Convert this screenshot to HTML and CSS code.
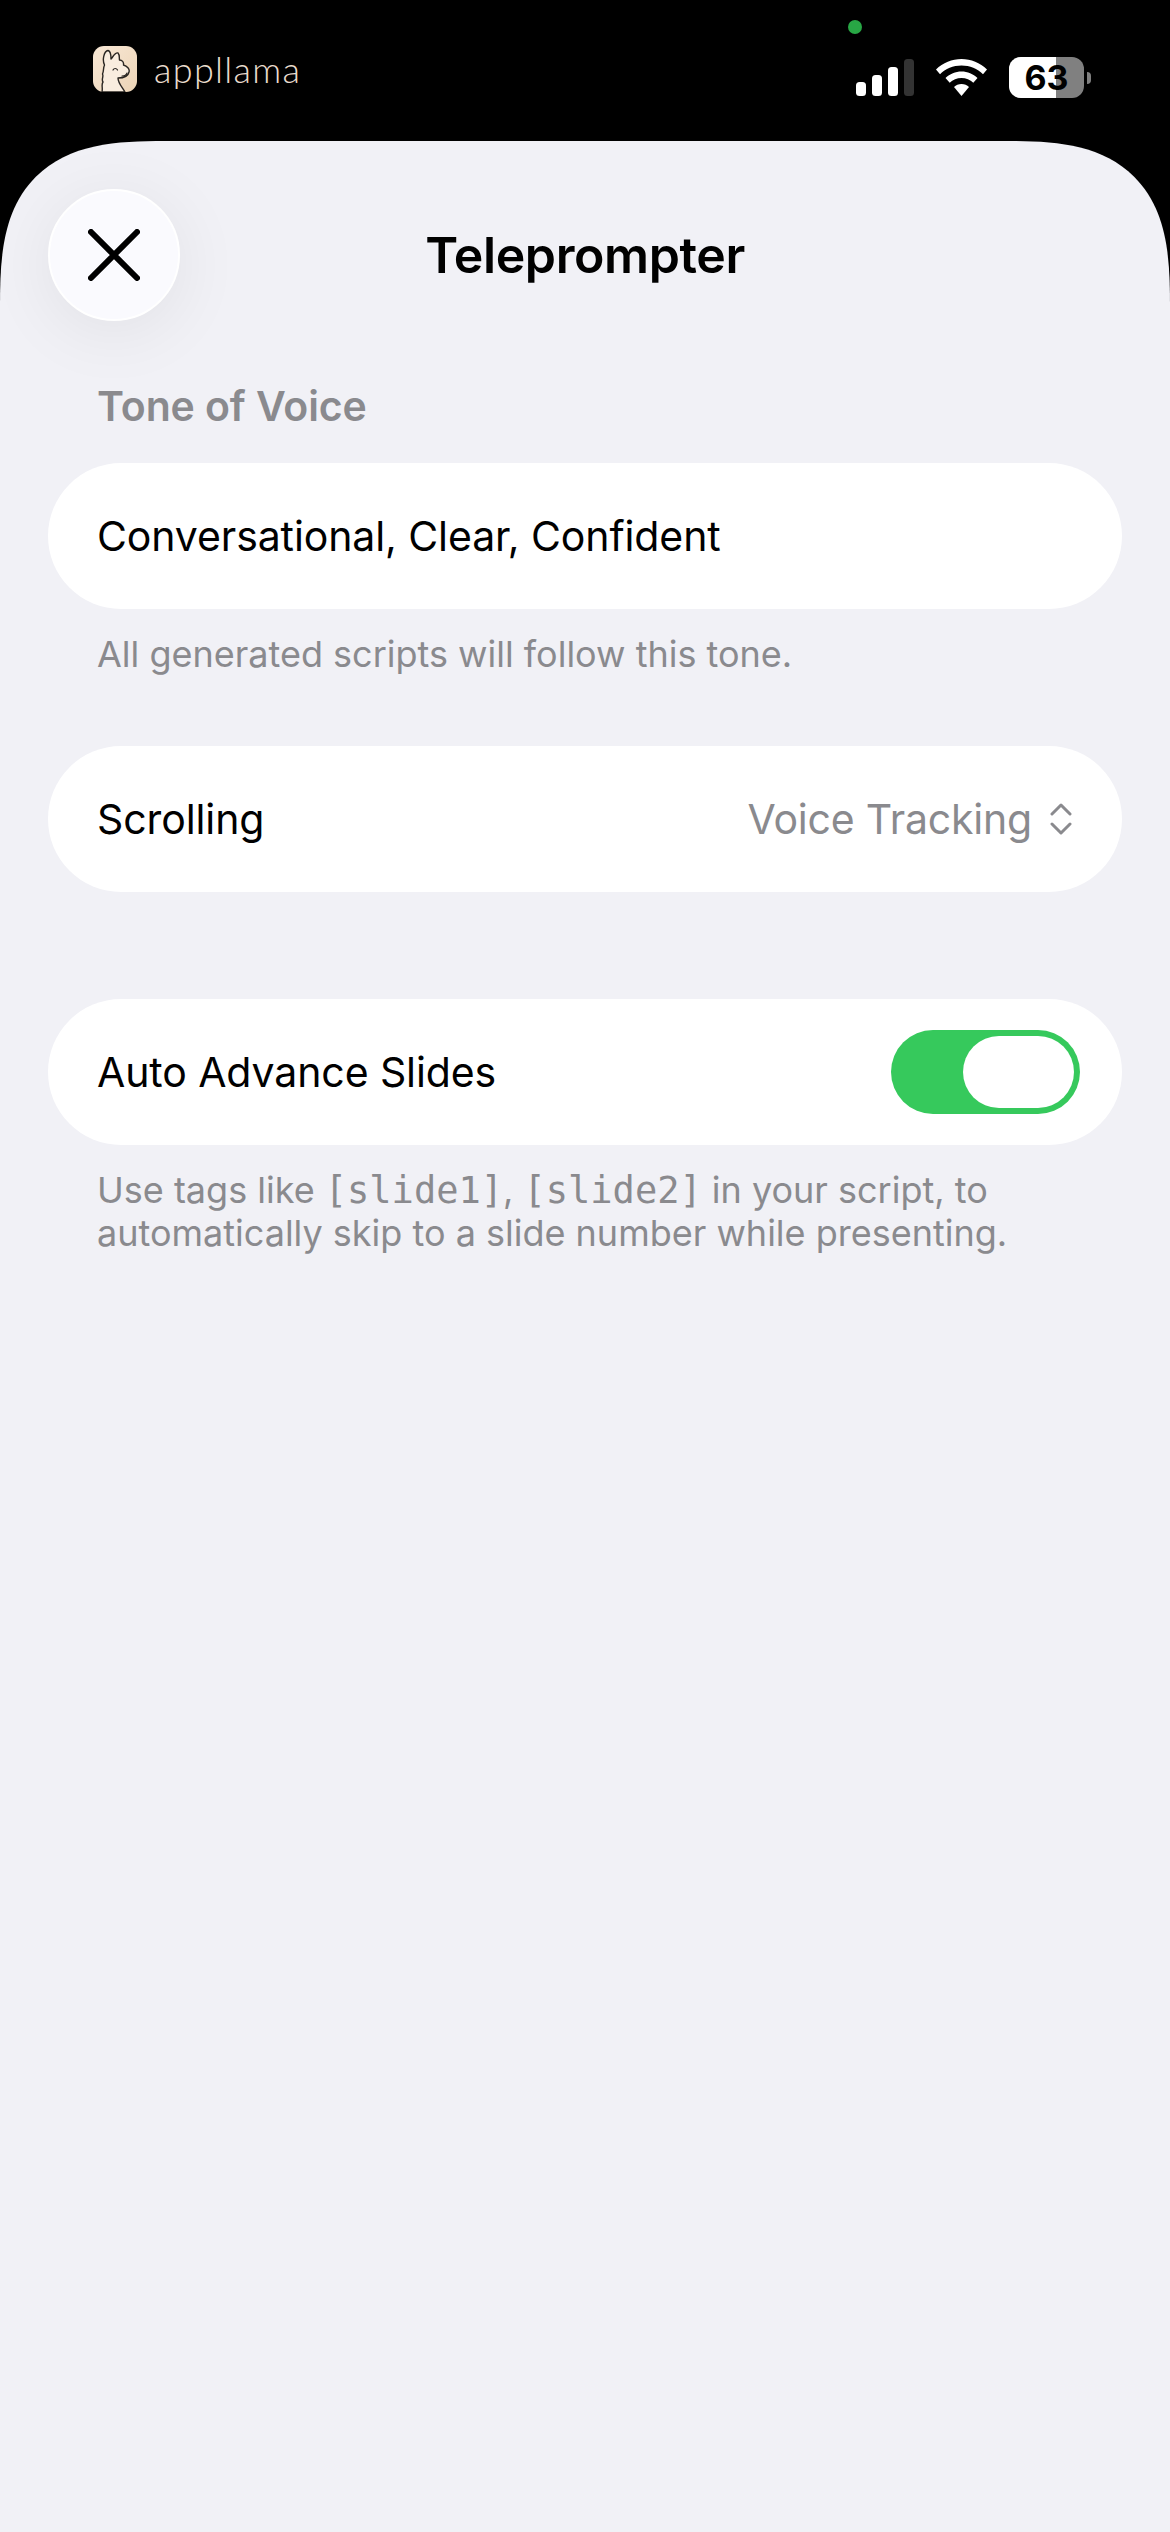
FILE: index.html
```html
<!DOCTYPE html>
<html lang="en">
<head>
    <meta charset="UTF-8">
    <meta name="viewport" content="width=device-width, initial-scale=1.0">
    <title>Teleprompter</title>
    <link rel="stylesheet" href="styles.css">
</head>
<body>

<header class="status-bar">
    <div class="brand">
        <svg class="brand-icon" viewBox="0 0 44 46" aria-hidden="true">
            <defs>
                <linearGradient id="brand-bg" x1="0" y1="0" x2="1" y2="1">
                    <stop offset="0" stop-color="#f8e8d6"/>
                    <stop offset="1" stop-color="#ecd4b6"/>
                </linearGradient>
            </defs>
            <rect width="44" height="46" rx="11" fill="url(#brand-bg)"/>
            <path d="M9 46C10 41 8 39 10 36C8 33 11 31 9.500 28C11 25 10 22 11.500 19C9 14 11 5 15 4.500C18 5 18 10 18 13C20 11 22 6 25 7C27 9 26 12 26.500 14C29 14 31 16 30.500 19C34 20 37 23 36 26C35 31 30 32 25 32C25 37 29 41 32 46Z" fill="#f9eddf" stroke="#2a2622" stroke-width="1.400" stroke-linejoin="round"/>
            <path d="M20 24C21 22 23.500 22 24.500 24M29 30C31.500 30 33.500 29 34 27" fill="none" stroke="#2a2622" stroke-width="1.200" stroke-linecap="round"/>
        </svg>
        <span class="brand-name">appllama</span>
    </div>
    <span class="camera-dot"></span>
    <div class="status-icons">
        <svg class="signal" viewBox="0 0 58 37" aria-hidden="true">
            <rect x="0" y="23" width="10" height="14" rx="3.500" fill="#fff"/>
            <rect x="16" y="16" width="10" height="21" rx="3.500" fill="#fff"/>
            <rect x="32" y="8" width="10" height="29" rx="3.500" fill="#fff"/>
            <rect x="48" y="0" width="10" height="37" rx="3.500" fill="#333"/>
        </svg>
        <svg class="wifi" viewBox="0 0 51 37" aria-hidden="true">
            <path d="M25.500 0C35 0 44 3.800 51 10.500L47 15.300C41.500 9.800 33.800 6.500 25.500 6.500C17.200 6.500 9.500 9.800 4 15.300L0 10.500C7 3.800 16 0 25.500 0Z" fill="#fff"/>
            <path d="M25.500 12.500C31.500 12.500 37.200 14.900 41.500 19L37.300 23.800C34.200 20.800 30 19 25.500 19C21 19 16.800 20.800 13.700 23.800L9.500 19C13.800 14.900 19.500 12.500 25.500 12.500Z" fill="#fff"/>
            <path d="M25.500 25C28.500 25 31 26.100 33 28L25.500 37L18 28C20 26.100 22.500 25 25.500 25Z" fill="#fff"/>
        </svg>
        <div class="battery">
            <div class="battery-body">
                <div class="battery-fill"></div>
                <span class="battery-text">63</span>
            </div>
            <span class="battery-nub"></span>
        </div>
    </div>
</header>

<main class="sheet">
    <div class="nav">
        <button class="close-button" aria-label="Close">
            <svg viewBox="0 0 52 52" aria-hidden="true">
                <path d="M3 3L49 49M49 3L3 49" fill="none" stroke="#000" stroke-width="6" stroke-linecap="round"/>
            </svg>
        </button>
        <h1 class="title">Teleprompter</h1>
    </div>

    <h2 class="section-label">Tone of Voice</h2>
    <div class="card">
        <span>Conversational, Clear, Confident</span>
    </div>
    <p class="hint">All generated scripts will follow this tone.</p>

    <div class="card card-scrolling">
        <span>Scrolling</span>
        <span class="picker">
            Voice Tracking
            <svg viewBox="0 0 22 32" aria-hidden="true">
                <path d="M2 11L11 2L20 11M2 21L11 30L20 21" fill="none" stroke="#8a8a8e" stroke-width="3" stroke-linecap="round" stroke-linejoin="round"/>
            </svg>
        </span>
    </div>

    <div class="card card-advance">
        <span>Auto Advance Slides</span>
        <span class="toggle"><span class="toggle-knob"></span></span>
    </div>
    <p class="hint">Use tags like <code>[slide1]</code>, <code>[slide2]</code> in your script, to automatically skip to a slide number while presenting.</p>
</main>

</body>
</html>
```
FILE: styles.css
```css
* {
    margin: 0;
    padding: 0;
    box-sizing: border-box;
}

body {
    font-family: Inter, "Liberation Sans", sans-serif;
    background-color: #000;
    display: flex;
    flex-direction: column;
    height: 100vh;
    overflow: hidden;
}

.status-bar {
    position: relative;
    height: 141px;
    flex-shrink: 0;
    display: flex;
    justify-content: space-between;
    padding: 46px 79px 0 93px;
}

.brand {
    display: flex;
    align-items: flex-start;
    gap: 17px;
}

.brand-icon {
    width: 44px;
    height: 46px;
}

.brand-name {
    font-family: Lato, sans-serif;
    font-weight: 300;
    font-size: 36px;
    line-height: 46px;
    letter-spacing: 1.3px;
    color: #eadccd;
}

.camera-dot {
    position: absolute;
    left: 848px;
    top: 20px;
    width: 14px;
    height: 14px;
    border-radius: 50%;
    background-color: #28a745;
}

.status-icons {
    display: flex;
    align-items: flex-start;
    padding-top: 11px;
}

.signal {
    width: 58px;
    height: 37px;
    margin-top: 2px;
}

.wifi {
    width: 51px;
    height: 37px;
    margin: 2px 22px;
}

.battery {
    display: flex;
    align-items: center;
    gap: 3px;
}

.battery-body {
    position: relative;
    width: 75px;
    height: 41px;
    background-color: #808080;
    border-radius: 12px;
    overflow: hidden;
    display: flex;
    align-items: center;
    justify-content: center;
}

.battery-fill {
    position: absolute;
    left: 0;
    top: 0;
    bottom: 0;
    width: 47px;
    background-color: #fff;
}

.battery-text {
    position: relative;
    font-size: 34px;
    font-weight: 700;
    color: #000;
}

.battery-nub {
    width: 4px;
    height: 12px;
    background-color: #808080;
    border-radius: 0 4px 4px 0;
}

.sheet {
    flex: 1;
    background-color: #f1f1f6;
    border-radius: 165px 165px 0 0;
    corner-shape: superellipse(1.5);
    padding: 48px 48px 0;
}

.nav {
    display: grid;
    grid-template-columns: 132px 1fr 132px;
    align-items: center;
}

.close-button {
    width: 132px;
    height: 132px;
    border: 2px solid #fff;
    border-radius: 50%;
    background-color: #fafafe;
    box-shadow: 0 10px 70px rgba(0, 0, 0, 0.07);
    display: flex;
    align-items: center;
    justify-content: center;
}

.close-button svg {
    width: 52px;
    height: 52px;
}

.title {
    font-size: 50px;
    font-weight: 600;
    letter-spacing: -0.4px;
    text-align: center;
    color: #000;
}

.section-label {
    margin: 60px 0 32px 49px;
    font-size: 41px;
    line-height: 50px;
    font-weight: 600;
    letter-spacing: -0.1px;
    color: #8a8a8e;
}

.card {
    height: 146px;
    padding: 0 42px 0 49px;
    background-color: #fff;
    border-radius: 73px;
    display: flex;
    align-items: center;
    justify-content: space-between;
    font-size: 41px;
    letter-spacing: -0.1px;
    color: #000;
}

.hint {
    margin: 24px 49px 0;
    font-size: 36px;
    line-height: 42px;
    color: #8a8a8e;
}

.hint code {
    font-family: "DejaVu Sans Mono", monospace;
    font-size: 37px;
}

.card-scrolling {
    margin-top: 71px;
}

.card-advance {
    margin-top: 107px;
}

.picker {
    display: flex;
    align-items: center;
    gap: 18px;
    margin-right: 8px;
    letter-spacing: -0.2px;
    color: #8a8a8e;
}

.picker svg {
    width: 22px;
    height: 32px;
}

.toggle {
    display: flex;
    justify-content: flex-end;
    align-items: center;
    width: 189px;
    height: 84px;
    padding: 6px;
    border-radius: 42px;
    background-color: #36c95c;
}

.toggle-knob {
    width: 111px;
    height: 72px;
    border-radius: 36px;
    background-color: #fff;
}
```
